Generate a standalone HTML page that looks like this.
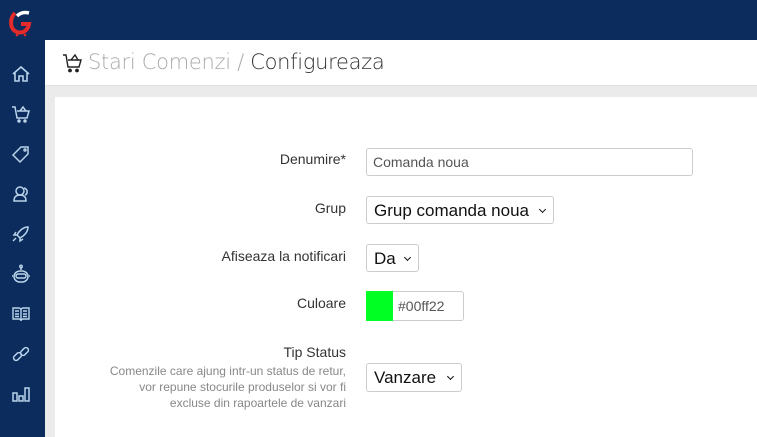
<!DOCTYPE html>
<html><head><meta charset="utf-8"><style>
*{margin:0;padding:0;box-sizing:border-box}
body{width:757px;height:437px;overflow:hidden;background:#ebebeb;font-family:"Liberation Sans",Arial,sans-serif;position:relative}
.top{position:absolute;left:0;top:0;width:757px;height:40px;background:#0b2c5c}
.side{position:absolute;left:0;top:0;width:45px;height:437px;background:#0b2c5c}
.hdr{position:absolute;left:45px;top:40px;width:712px;height:46px;background:#fff;border-bottom:1px solid #e0e0e0}
.hdr .t{position:absolute;left:43px;top:10px;font-size:21px;color:#aaa;font-family:"DejaVu Sans","Liberation Sans",sans-serif;font-weight:300;letter-spacing:-0.3px}
.hdr .t b{font-weight:300;color:#333}
.card{position:absolute;left:55px;top:97px;width:702px;height:340px;background:#fff}
.lbl{position:absolute;right:411px;font-size:14px;color:#333;text-align:right}
.in{position:absolute;left:366px;border:1px solid #ccc;border-radius:3px;background:#fff;color:#555}
.sel{position:absolute;left:366px;border:1px solid #ccc;border-radius:3px;background:#fff;color:#111;font-size:17px;padding:4px 0 0 7px;white-space:nowrap}
.sel:after{content:"";position:absolute;right:8px;top:10px;width:4px;height:4px;border-right:1.6px solid #111;border-bottom:1.6px solid #111;transform:rotate(45deg)}
.ic{position:absolute;left:11px}
</style></head><body>
<div class="top"></div>
<div class="side">
<svg style="position:absolute;left:7px;top:10px" width="26" height="28" viewBox="0 0 26 28"><path d="M8 3 C2 9 3 20 10 22 C16 24 21 20 22 14 L14 14" fill="none" stroke="#e42a2a" stroke-width="4"/><path d="M10 6 C14 2 18 2 22 3" stroke="#fff" stroke-width="3.5" fill="none"/><circle cx="10" cy="25" r="1.3" fill="#e42a2a"/><circle cx="18" cy="25" r="1.3" fill="#e42a2a"/></svg>
<svg class="ic" style="top:64px" width="20" height="20" viewBox="0 0 20 20" fill="none" stroke="#b9d3ea" stroke-width="1.6"><path d="M2 10 L10 3 L18 10 M4 9 V17 H8 V12 H12 V17 H16 V9"/></svg>
<svg class="ic" style="top:104px" width="20" height="20" viewBox="0 0 20 20" fill="none" stroke="#b9d3ea" stroke-width="1.5"><path d="M1 3 H4 L6 14 H16 L18 7 H6 M9 7 L12 3 L15 7"/><circle cx="8" cy="17" r="1" fill="#b9d3ea"/><circle cx="14" cy="17" r="1" fill="#b9d3ea"/></svg>
<svg class="ic" style="top:144px" width="20" height="20" viewBox="0 0 20 20" fill="none" stroke="#b9d3ea" stroke-width="1.5"><path d="M10 3 H17 V10 L9 18 L2 11 Z"/><circle cx="14" cy="6" r="1"/></svg>
<svg class="ic" style="top:184px" width="20" height="20" viewBox="0 0 20 20" fill="none" stroke="#b9d3ea" stroke-width="1.5"><circle cx="9" cy="7" r="4"/><path d="M3 17 C3 12 6 11 9 11 C12 11 15 12 15 17 Z M13 4 C17 5 17 10 14 11"/></svg>
<svg class="ic" style="top:224px" width="20" height="20" viewBox="0 0 20 20" fill="none" stroke="#b9d3ea" stroke-width="1.5"><path d="M17 3 C12 3 8 7 6 11 L9 14 C13 12 17 8 17 3 Z M6 11 L3 11 L5 8 M9 14 V17 L12 15 M5 14 L2 17"/></svg>
<svg class="ic" style="top:264px" width="20" height="22" viewBox="0 0 20 22" fill="none" stroke="#b9d3ea" stroke-width="1.5"><circle cx="10" cy="2.5" r="1.2"/><path d="M10 4 V6"/><rect x="3" y="7" width="14" height="11" rx="6"/><rect x="5" y="10" width="10" height="4" rx="2"/><path d="M2 12 H1 M18 12 H19"/></svg>
<svg class="ic" style="top:304px" width="20" height="20" viewBox="0 0 20 20" fill="none" stroke="#b9d3ea" stroke-width="1.4"><path d="M2 4 H8 C9 4 10 5 10 6 V17 C10 16 9 15 8 15 H2 Z M18 4 H12 C11 4 10 5 10 6 V17 C10 16 11 15 12 15 H18 Z M4 7 H8 M4 10 H8 M4 12.5 H8 M12 7 H16 M12 10 H16 M12 12.5 H16"/></svg>
<svg class="ic" style="top:344px" width="20" height="20" viewBox="0 0 20 20" fill="none" stroke="#b9d3ea" stroke-width="1.5"><rect x="2" y="10" width="9" height="5" rx="2.5" transform="rotate(-45 6.5 12.5)"/><rect x="9" y="5" width="9" height="5" rx="2.5" transform="rotate(-45 13.5 7.5)"/></svg>
<svg class="ic" style="top:384px" width="20" height="20" viewBox="0 0 20 20" fill="none" stroke="#b9d3ea" stroke-width="1.5"><rect x="2" y="9" width="4" height="8"/><rect x="8" y="12" width="4" height="5"/><rect x="14" y="4" width="4" height="13"/></svg>
</div>
<div class="hdr">
<svg style="position:absolute;left:17px;top:12px" width="22" height="22" viewBox="0 0 22 22" fill="none" stroke="#222" stroke-width="1.4"><path d="M1 3 H4 L6 15 H17 L19 8 H6 M9 8 L13 3 L16 8"/><circle cx="8" cy="18.5" r="1.2" fill="#222"/><circle cx="15" cy="18.5" r="1.2" fill="#222"/></svg>
<div class="t">Stari Comenzi / <b>Configureaza</b></div>
</div>
<div class="card"></div>
<div class="lbl" style="top:151px">Denumire*</div>
<div class="in" style="top:148px;width:327px;height:28px;font-size:14px;padding:5px 6px">Comanda noua</div>
<div class="lbl" style="top:200px">Grup</div>
<div class="sel" style="top:196px;width:188px;height:28px">Grup comanda noua</div>
<div class="lbl" style="top:248px">Afiseaza la notificari</div>
<div class="sel" style="top:244px;width:53px;height:28px">Da</div>
<div class="lbl" style="top:295px">Culoare</div>
<div style="position:absolute;left:366px;top:291px;width:28px;height:30px;background:#00ff22"></div>
<div class="in" style="top:291px;left:393px;width:71px;height:30px;font-size:14px;padding:6px 5px;border-left:none;border-radius:0 3px 3px 0">#00ff22</div>
<div class="lbl" style="top:344px">Tip Status</div>
<div class="lbl" style="top:363px;font-size:12px;color:#888;line-height:16px">Comenzile care ajung intr-un status de retur,<br>vor repune stocurile produselor si vor fi<br>excluse din rapoartele de vanzari</div>
<div class="sel" style="top:363px;width:96px;height:29px">Vanzare</div>
</body></html>
